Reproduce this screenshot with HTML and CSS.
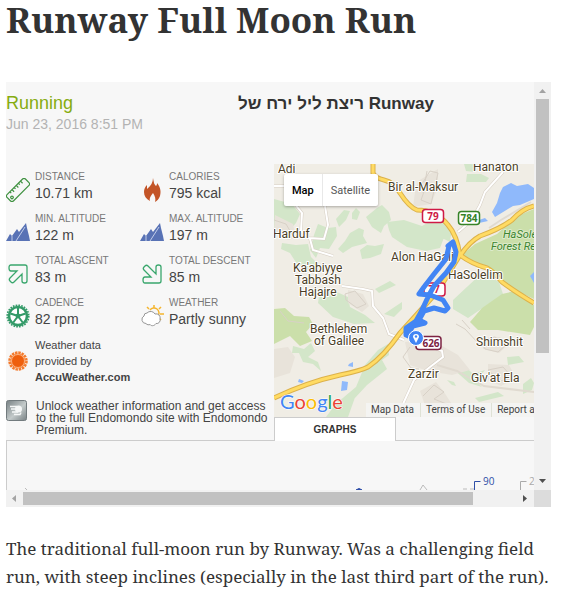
FILE: index.html
```html
<!DOCTYPE html>
<html lang="en">
<head>
<meta charset="utf-8">
<title>Runway Full Moon Run</title>
<link rel="stylesheet" href="styles.css">
</head>
<body>
<svg class="sprite" aria-hidden="true">
  <symbol id="peaks" viewBox="0 0 24 24"><path d="M0 21l4-7 2 2 5-7 2 3 7-9 1 5 2 8 1 5z" fill="#5872b5"/><path d="M6 21V16M10 21l9-14" stroke="#dce3f5" stroke-width=".8" fill="none"/></symbol>
  <symbol id="arrow" viewBox="0 0 24 24"><path d="M5 3h14q2 0 2 2v14q0 2-2.500 2T16 19v-7l-8 8q-1.500 1.500-3 0l-1-1q-1.500-1.500 0-3l7-7H5q-2 0-2-3 0-3 2-3z" fill="none" stroke="#3aa76d" stroke-width="1.300"/></symbol>
</svg>
<main class="post">
  <h1 class="post-title">Runway Full Moon Run</h1>

  <section class="frame" aria-label="Workout">
    <div class="view">
      <header class="head">
        <div>
          <div class="sport">Running</div>
          <div class="date">Jun 23, 2016 8:51 PM</div>
        </div>
        <h2 class="name">ריצת ליל ירח של Runway</h2>
      </header>

      <div class="summary">
        <div class="facts">
          <dl class="stats">
            <div class="stat">
              <svg class="icon" viewBox="0 0 24 24"><g transform="rotate(-45 12 12)" fill="#f7f7f7" stroke="#3f9140" stroke-width="1.2"><rect x="-1" y="7.500" width="26" height="9" rx="2"/><path d="M5 7.500v2M8 7.500v3M11 7.500v2M14 7.500v3M17 7.500v2M20 7.500v3"/><circle cx="2.500" cy="13" r="1.300"/></g></svg>
              <dt>DISTANCE</dt><dd>10.71 km</dd>
            </div>
            <div class="stat">
              <svg class="icon" viewBox="0 0 24 24"><path d="M13 0c1 5 1 6 3 8 1-1 1-2 1-3 4 5 4 9 3 13-1 3-3 5-5 6 1-3 0-6-2-9-2 3-4 5-3 8-4-2-6-5-6-9 0-3 1-5 3-7v4c4-3 6-7 6-11z" fill="#c35427"/></svg>
              <dt>CALORIES</dt><dd>795 kcal</dd>
            </div>
            <div class="stat">
              <svg class="icon"><use href="#peaks"/></svg>
              <dt>MIN. ALTITUDE</dt><dd>122 m</dd>
            </div>
            <div class="stat">
              <svg class="icon"><use href="#peaks"/></svg>
              <dt>MAX. ALTITUDE</dt><dd>197 m</dd>
            </div>
            <div class="stat">
              <svg class="icon"><use href="#arrow"/></svg>
              <dt>TOTAL ASCENT</dt><dd>83 m</dd>
            </div>
            <div class="stat">
              <svg class="icon" viewBox="0 0 24 24"><use href="#arrow" width="24" height="24" transform="matrix(1 0 0 -1 0 24)"/></svg>
              <dt>TOTAL DESCENT</dt><dd>85 m</dd>
            </div>
            <div class="stat">
              <svg class="icon" viewBox="0 0 24 24"><circle cx="12" cy="12" r="10.800" fill="none" stroke="#339a68" stroke-width="1.600" stroke-dasharray="1.700 1.130"/><circle cx="12" cy="12" r="9" fill="#fff" stroke="#339a68" stroke-width="2.600"/><path d="M12 12V4M12 12l7.600-2.500M12 12l4.700 6.500M12 12l-4.700 6.500M12 12L4.400 9.500" stroke="#339a68" stroke-width="2"/><circle cx="12" cy="12" r="2.400" fill="#339a68"/></svg>
              <dt>CADENCE</dt><dd>82 rpm</dd>
            </div>
            <div class="stat">
              <svg class="icon" viewBox="0 0 24 24"><path d="M10 6a5 5 0 1 1 8 6M14 4V1M9 5L7 3M19 5l2-2M20 10h4M19 14l2 2" fill="none" stroke="#f5b52e" stroke-width="1.500"/><path d="M6 19.500a4 4 0 0 1-2-7.500 3 3 0 0 1 3-3 5 5 0 0 1 8 1 4 4 0 0 1 5 5 3.500 3.500 0 0 1-4 4.500c-2 3-5 2.500-6 1-1 .5-3 .5-4-1z" fill="#fff" stroke="#969696"/></svg>
              <dt>WEATHER</dt><dd>Partly sunny</dd>
            </div>
          </dl>

          <div class="note credit">
            <svg class="icon" viewBox="0 0 24 24"><circle cx="12" cy="12" r="8.500" fill="none" stroke="#f47a2c" stroke-width="2.500" stroke-dasharray="2.500 .84"/><circle cx="12" cy="12" r="7.500" fill="#f47a2c"/><circle cx="12" cy="12" r="6.500" fill="#ee5f0d" stroke="#ffd0ae" stroke-width=".7"/></svg>
            <p>Weather data<br>provided by<br><b>AccuWeather.com</b></p>
          </div>
          <div class="note premium">
            <svg class="icon" viewBox="0 0 24 24"><defs><linearGradient id="metal" x2="1" y2="1"><stop offset="0" stop-color="#788184"/><stop offset=".55" stop-color="#c3caca"/><stop offset="1" stop-color="#788184"/></linearGradient></defs><rect x=".5" y=".5" width="20" height="20" rx="2" fill="url(#metal)" stroke="#727b7e"/><circle cx="12.500" cy="9" r="3.500" fill="#f5f7f7"/><path d="M4 6.500h7M5 9h6M8 14.500h6l1-2M6 12h6" fill="none" stroke="#f5f7f7" stroke-width="1.500"/></svg>
            <p>Unlock weather information and get access to the full Endomondo site with Endomondo Premium.</p>
          </div>
        </div>

        <div class="map">
          <svg class="map-art" viewBox="274 164 260 253" preserveAspectRatio="xMinYMin slice" role="img" aria-label="Map of the route">
            <rect x="274" y="164" width="400" height="300" fill="#f0ede5"/>
            <g fill="#d3e6c9">
              <path d="M274 199l18 5 8 10-4 9-11 12-11-4zM282 243l14 2 12-1 3 13 8 8-10 5-12-6-7-11-9-4z"/>
              <path d="M328 228l8-1 1 9-8 13-9-1-4 10-6-8 4-15 4-11zM336 219l8-9 6 1-4 9-7 7zM352 213l4-5 4 4-3 8-5-1z"/>
              <path d="M366 217l11-9 5-3 7 7 2 8-7 6-3 7-9-6zM350 233l9-5 5 2-1 6 4 7-15 4-9 6-5-4 7-8zM360 250l7-5 8 1 9-2-3 10-11 4-8 1z"/>
              <path d="M387 222l17-2 18 6 18-10 8 11-8 21-14 3-19-4-15-10-3-7zM464 164h11l1 8-10-1zM467 174h14l8 4-3 4-20 0zM437 220l15 8-2 14-10-5zM453 300l30-28 16 10 4 12-35 24-15-9z"/>
              <path d="M320 290l10-1 18 8 2 10 15 8 10 8-21 1-21-7-15-14zM384 314l18-12v7l-8 8zM293 346l11 3 7-6 4 8-7 6 10 5 3 9-8-7-10-2-4-9-7 0zM378 350l10-6 1 11-7 5 5 9-20 16-13 14-20 8 10-10 12-10 9-22zM326 417l12-16 20-12-10 28z"/>
              <path d="M453 369l12-3 8 8 12-4-9 11 6 6-13-4-9-8zM447 380l7 2 2 4-4-1zM507 357l12-1 5 6-16 3zM523 384l8-6 3 5-2 7-9 4zM475 398l23-6 6 4-25 6zM375 289l15-8 6 4-17 8z"/>
            </g>
            <g fill="#cbdfaa">
              <path d="M534 209l-17 7-20 18-22 10-12 10 4 6 21 6 20 21 26 12z"/>
              <path d="M470 322l12-14 20-14 13-3 19 14v22l-4 8-32-5-20 0zM274 309l11-1 9 8 15 1 4 7-7 8 6 9-12 5-10-10-16 8z"/>
            </g>
            <g fill="#e8e3da">
              <path d="M418 181l20-12v18l-7 17-18 3 2-15zM275 215l18 9 3 14-8 2-14-8zM274 349l14-2 7 10-5 16-16 5zM348 290l15 4 6 12-7 6-14-9zM405 342l25-3 28 16 12 15-18 5-24-4-18-6zM420 391l16-9 8 10 9 14-14 10-13-8zM482 339l18-2 8 8-9 8-16-4zM488 364l21 1 7 13-15 8-13-6z"/>
            </g>
            <g fill="none" stroke="#d8d1c7">
              <path d="M420 187l10-16 8 2-7 31-10-4 5-14M410 347l-7 10 8 11 8 1M423 396l11-11 10 7-10 7 15 6-8 8M480 340l15-3 11 8-8 7-13-3zM488 370l15-3 10 11-13 3zM345 294l10-3 11 13-9 4-11-8zM422 190l15-3M427 171l-4 22M274 220l12 4 7 12M280 311l8 10 16 2M462 320l8 9M456 324l9 5 14 15"/>
            </g>
            <g fill="#8fb9fb"><path d="M503 187l8-4 6 3 11-2 6 4v11l-14 6-7 1-18 11-3-5 5-9 3-10zM479 220l6-2 3 3-9 2zM349 364l4-2v5l-5-1zM342 381l6 1-1 8-6 1zM299 379l5 2-2 2-4-1zM530 276l4-4v11z"/></g>
            <path d="M286 193l16 20-1 18 9 8M325 206l3 19-4 14-15-1M310 239l3 11 20 6M342 286l21 3 9 2 1 15 10 12 6 16 15 6M503 172l-18 20-5 13-9 16-13 11M425 344l17 7 1 6-13 10-16 13-11 24M274 186h20" fill="none" stroke="#d6cec3" stroke-width="3"/>
            <path d="M437 365l20 6 27 15 50 6M489 228l12-8 30-18" fill="none" stroke="#e0dad0" stroke-width="2"/>
            <path d="M286 193l16 20-1 18 9 8M325 206l3 19-4 14-15-1M310 239l3 11 20 6M342 286l21 3 9 2 1 15 10 12 6 16 15 6M503 172l-18 20-5 13-9 16-13 11M425 344l17 7 1 6-13 10-16 13-11 24M274 186h20" fill="none" stroke="#fff" stroke-width="2"/>
            <g fill="none" stroke-linejoin="round">
              <path d="M373 164v9q2 5 11 7 10 2 16 13 9 14 17 17 19 0 31 15 9 10 12 31M534 206q-12 3-22 14-12 9-32 16-11 6-20 20M460 255q12 9 27 13 6 3 15 14 12 9 32 21M460 255l-22 36-38 42q-16 23-32 34-8 4-28 8-32 7-66 23" stroke="#dcb14a" stroke-width="5"/>
              <path d="M373 164v9q2 5 11 7 10 2 16 13 9 14 17 17 19 0 31 15 9 10 12 31M534 206q-12 3-22 14-12 9-32 16-11 6-20 20M460 255q12 9 27 13 6 3 15 14 12 9 32 21M460 255l-22 36-38 42q-16 23-32 34-8 4-28 8-32 7-66 23" stroke="#ffdb63" stroke-width="3"/>
            </g>
            <g class="place">
              <text x="278" y="173">Adi</text><text x="473" y="171">Hanaton</text><text x="388" y="191">Bir al-Maksur</text>
              <text x="273" y="238">Harduf</text><text x="391" y="261">Alon HaGalil</text><text x="448" y="279">HaSolelim</text>
              <text x="293" y="272">Ka'abiyye</text><text x="295" y="284">Tabbash</text><text x="299" y="296">Hajajre</text>
              <text x="310" y="333">Bethlehem</text><text x="314" y="345">of Galilee</text><text x="476" y="346">Shimshit</text>
              <text x="408" y="378">Zarzir</text><text x="471" y="382">Giv'at Ela</text>
            </g>
            <g class="reserve"><text x="503" y="238">HaSolelim</text><text x="491" y="250">Forest Reserve</text></g>
            <g class="shield">
              <g stroke="#cf1945" fill="#cf1945"><rect x="422.500" y="209.500" width="21" height="13" rx="3" fill="#fff" stroke-width="1.500"/><text x="433" y="220">79</text><rect x="424" y="283" width="21" height="13" rx="3" fill="#fff" stroke-width="1.500"/><text x="434" y="293">77</text></g>
              <g fill="#368327"><rect x="458.500" y="211.500" width="21" height="13" rx="3" fill="#fff" stroke="#368327" stroke-width="1.500"/><text x="469" y="222">784</text></g>
              <g fill="#7c2342"><rect x="416" y="336.500" width="25" height="13" rx="3" fill="#fff" stroke="#7c2342" stroke-width="1.500"/><text x="431" y="347">626</text></g>
            </g>
            <path d="M448 246l5-4 3 10-2 10-8 11-12 13-5 9-8 17-5 9-10 7 0 7 7 3M449 246l-3 13-12 15-10 13-5 7 11 1 13 5 5 8-3 3-11-3-10 3-6 8M424 311l-5 9 6 3-12 3-5 8" fill="none" stroke="#4285f4" stroke-width="5" stroke-linejoin="round" stroke-linecap="round"/>
            <circle cx="416" cy="338" r="7.500" fill="#4285f4" stroke="#fff" stroke-width="1"/>
            <path d="M416 343l-3-6a3 3 0 1 1 6 0z" fill="#fff"/><circle cx="416" cy="336.500" r="1.200" fill="#4285f4"/>
            <text class="logo" x="280" y="409"><tspan fill="#4285f4">G</tspan><tspan fill="#ea4335">o</tspan><tspan fill="#fbbc05">o</tspan><tspan fill="#4285f4">g</tspan><tspan fill="#34a853">l</tspan><tspan fill="#ea4335">e</tspan></text>
          </svg>
          <div class="map-type"><button type="button" class="on">Map</button><button type="button">Satellite</button></div>
          <div class="map-legal"><span>Map Data</span><a href="#terms">Terms of Use</a><a href="#report">Report a map error</a></div>
        </div>
      </div>

      <div class="tabs"><button type="button" class="tab">GRAPHS</button></div>
      <div class="graph">
        <svg viewBox="7 441 527 49" preserveAspectRatio="xMinYMin slice" role="img" aria-label="Graph">
          <path d="M356 490q3-3 6 0z" fill="#2f4fa8" stroke="#2f4fa8"/>
          <path d="M420 490l3-5 4 5M463 489h4M470 489h4M25 488l2 2" fill="none" stroke="#bbb"/>
          <path d="M474.500 490v-8.500h6" fill="none" stroke="#2f4fa8"/><path d="M520.500 490v-8.500h6" fill="none" stroke="#aaa"/>
          <text x="483" y="485" fill="#2f4fa8">90</text><text x="529" y="485" fill="#aaa">20</text>
        </svg>
      </div>
    </div>
    <div class="bar down"><svg viewBox="0 0 17 17"><path d="M5 11h7l-3.500-4z" fill="#a3a3a3"/></svg><i class="thumb"></i><svg viewBox="0 0 17 17"><path d="M5 6h7l-3.500 4z" fill="#505050"/></svg></div>
    <div class="bar across"><svg viewBox="0 0 17 17"><path d="M10 5v7L6 8.500z" fill="#a3a3a3"/></svg><i class="thumb"></i><svg viewBox="0 0 17 17"><path d="M6 5v7l4-3.500z" fill="#505050"/></svg></div>
    <div class="corner"></div>
  </section>

  <p class="story">The traditional full-moon run by Runway. Was a challenging field run, with steep inclines (especially in the last third part of the run).</p>
</main>
</body>
</html>
```

FILE: styles.css
```css
* { box-sizing: border-box; }
body { margin: 0; background: #fff; color: #333; font-family: "Noto Serif", "Droid Serif", "Liberation Serif", serif; }
h1, h2, p, dl, dd { margin: 0; }
button { margin: 0; border: 0; font: inherit; color: inherit; cursor: pointer; }
.sprite { display: none; }
.post { padding: 0 18px 0 6px; }
.post-title { font-size: 35px; line-height: 40px; font-weight: 700; white-space: nowrap; }

.frame { display: grid; grid-template-columns: minmax(0, 1fr) 17px; grid-template-rows: 408px 17px; margin-top: 42px; font-family: "Liberation Sans", Arial, sans-serif; }
.view { background: #f7f7f7; overflow: hidden; }
.head { display: flex; height: 82px; padding-top: 11px; }
.head > div { flex: 0 0 232px; }
.sport { font-size: 18px; line-height: 21px; color: #86ac10; }
.date { font-size: 14px; line-height: 21px; color: #b3b3b3; }
.name { font-size: 17px; line-height: 21px; color: #333; white-space: nowrap; }

.summary { display: flex; height: 253px; }
.facts { flex: 0 0 268px; min-width: 0; }
.stats { display: grid; grid-template-columns: 134px 134px; grid-auto-rows: 42px; padding-top: 6px; }
.stat { display: grid; grid-template-columns: 24px 1fr; grid-template-rows: 14px 18px; column-gap: 5px; }
.icon { width: 24px; height: 24px; }
.stat .icon { grid-row: 1 / 3; margin-top: 8px; }
dt { font-size: 10px; line-height: 14px; color: #777; }
dd { font-size: 14px; line-height: 18px; color: #444; }
.note { display: flex; gap: 5px; color: #444; }
.credit { align-items: center; margin-top: -1px; font-size: 11px; line-height: 16px; }
.premium { gap: 6px; margin-top: 15px; font-size: 12px; line-height: 12px; }
.note .icon { flex: none; }

.map { position: relative; flex: 1; min-width: 0; overflow: hidden; }
.map-art { display: block; width: 100%; height: 253px; }
.place, .reserve { font-family: Roboto, sans-serif; font-size: 12px; fill: #4b3e26; stroke: #fff; stroke-width: 2px; paint-order: stroke; stroke-linejoin: round; }
.reserve { font-size: 11px; font-style: italic; fill: #3d8530; stroke: #dcebca; }
.shield text { font-family: "Open Sans", sans-serif; font-size: 10px; font-weight: 700; text-anchor: middle; stroke: none; }
.logo { font-family: Lato, sans-serif; font-size: 20px; stroke: #fff; stroke-width: 1px; paint-order: stroke; }
.map-type { position: absolute; left: 10px; top: 10px; display: flex; height: 32px; border-radius: 2px; background: #fff; box-shadow: 0 1px 3px rgba(0, 0, 0, .3); font-family: Roboto, sans-serif; font-size: 11px; color: #565656; }
.map-type button { padding: 0 8px; background: none; }
.map-type .on { color: #000; font-weight: 500; border-right: 1px solid #e8e8e8; }
.map-legal { position: absolute; left: 92px; right: 0; bottom: 0; display: flex; height: 14px; overflow: hidden; background: rgba(245, 245, 245, .75); font-family: Roboto, sans-serif; font-size: 10px; line-height: 14px; color: #444; white-space: nowrap; }
.map-legal > * { flex: none; padding: 0 6px 0 5px; color: inherit; text-decoration: none; }
.map-legal a { border-left: 1px solid #dfe2d6; }

.tabs { display: flex; height: 24px; padding-left: 268px; border-bottom: 1px solid #ccc; }
.tab { width: 122px; height: 24px; padding: 0; border: 1px solid #ccc; border-bottom: 0; background: #fff; font-size: 10px; font-weight: 700; color: #333; }
.graph { height: 49px; border-left: 1px solid #ccc; }
.graph svg { display: block; width: 100%; height: 49px; }
.graph text { font-family: "Open Sans", sans-serif; font-size: 10px; }

.bar { display: flex; background: #f1f1f1; }
.bar svg { flex: none; width: 17px; height: 17px; }
.bar .thumb { background: #c1c1c1; }
.down { flex-direction: column; justify-content: space-between; }
.down .thumb { flex: 0 0 254px; width: 13px; margin: 0 2px auto; }
.across .thumb { flex: 0 0 86%; max-width: 450px; height: 13px; margin: 2px auto 2px 0; }
.corner { background: #dcdcdc; }

.story { margin-top: 28px; font-size: 17px; line-height: 28px; }
```
